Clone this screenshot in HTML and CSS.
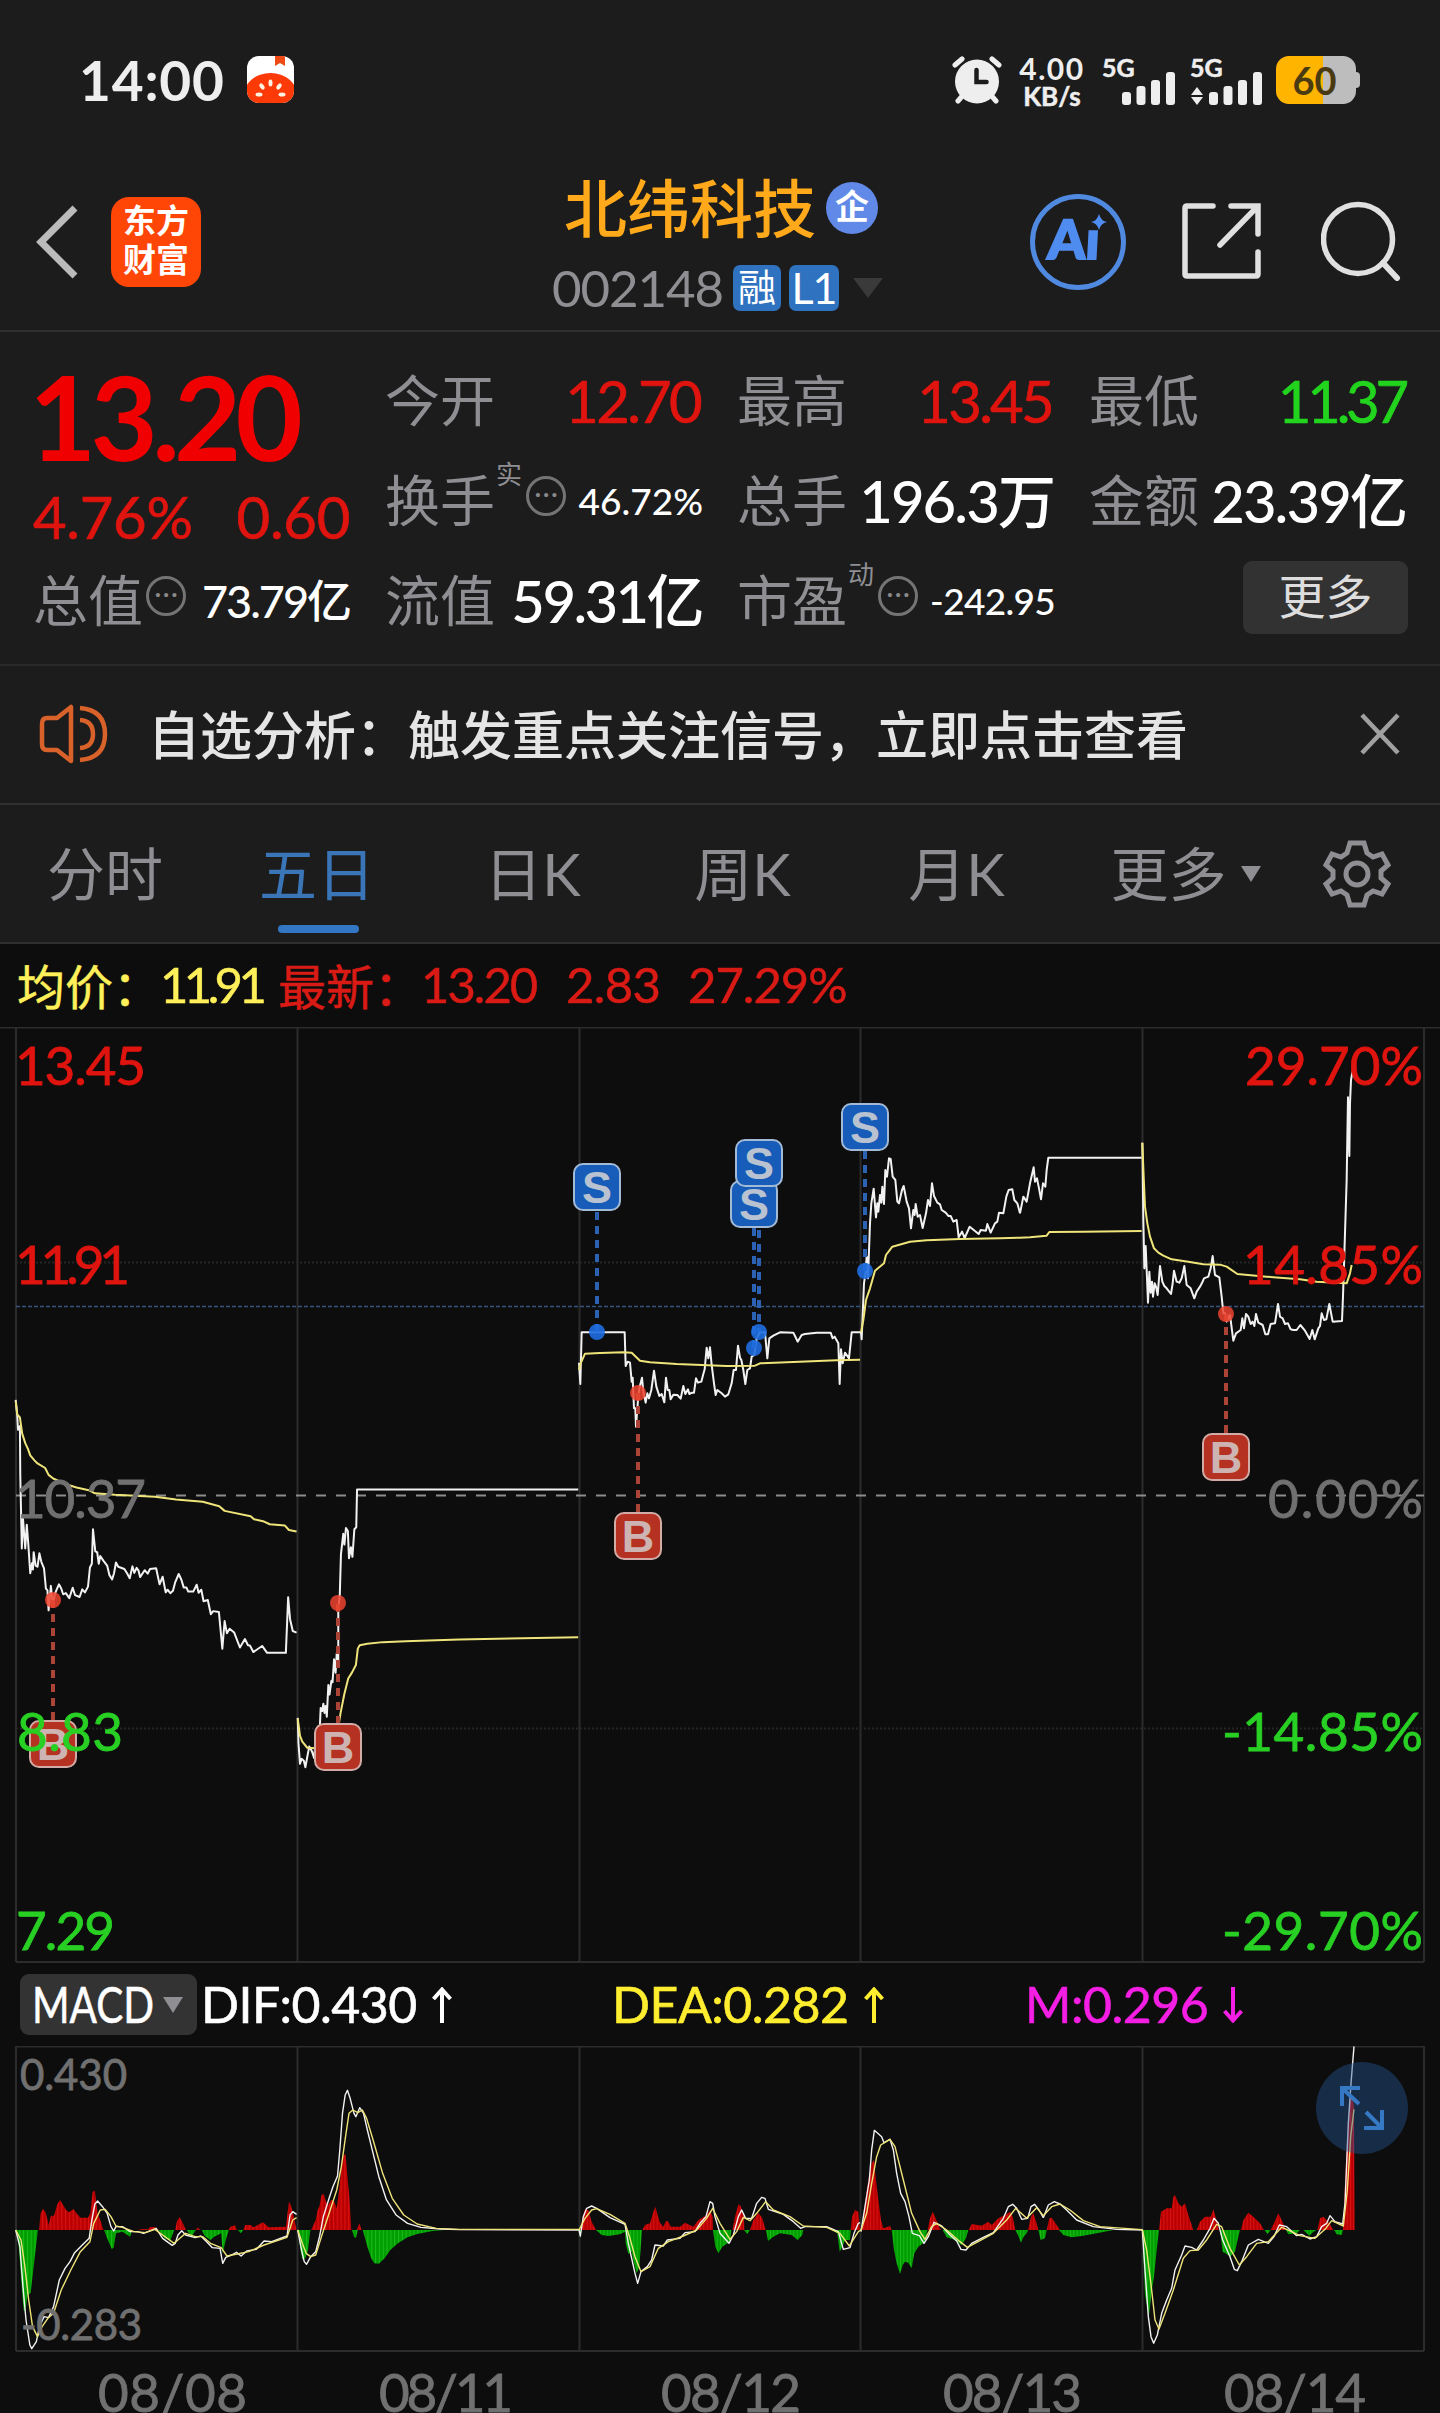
FILE: index.html
```html
<!DOCTYPE html>
<html lang="zh-CN">
<head>
<meta charset="utf-8">
<title>北纬科技 002148</title>
<link rel="stylesheet" href="styles.css">
</head>
<body>
<header class="top">
  <div class="status">
    <span class="clock">14:00</span>
    <svg class="tomato" width="47" height="47" viewBox="0 0 47 47"><defs><clipPath id="tc"><rect width="47" height="47" rx="12"/></clipPath></defs><g clip-path="url(#tc)"><rect width="47" height="47" fill="#fff"/><path d="M28 0h10v10l-5-3-5 3z" fill="#f04a14"/><ellipse cx="23.500" cy="40" rx="27" ry="23" fill="#fb3a08"/><g fill="#fff3e2"><ellipse cx="23.500" cy="27" rx="2" ry="3.500"/><ellipse cx="15" cy="30.500" rx="2" ry="3.500" transform="rotate(-35 15 30.500)"/><ellipse cx="32" cy="30.500" rx="2" ry="3.500" transform="rotate(35 32 30.500)"/><ellipse cx="12" cy="38.500" rx="3.500" ry="2"/><ellipse cx="35" cy="38.500" rx="3.500" ry="2"/></g></g></svg>
    <div class="status-right">
      <svg width="50" height="48" viewBox="0 0 50 48"><g stroke="#eee" stroke-width="5" stroke-linecap="round"><path d="M3 9l7-6M47 9l-7-6M12 38l-6 7M38 38l6 7"/></g><ellipse cx="25" cy="25.500" rx="22" ry="22" fill="#eee"/><path d="M24.500 14v12h10" fill="none" stroke="#1c1c1c" stroke-width="4.500" stroke-linecap="round"/></svg>
      <div class="speed"><span class="rate">4.00</span><span class="unit">KB/s</span></div>
      <div class="signal sig1"><span>5G</span></div>
      <svg class="bars bars1" width="54" height="34" viewBox="0 0 54 34" fill="#eee"><rect x="0" y="20" width="9" height="13" rx="3"/><rect x="14.500" y="14" width="9" height="19" rx="3"/><rect x="29" y="8" width="9" height="25" rx="3"/><rect x="44" y="0" width="9" height="33" rx="3"/></svg>
      <div class="signal sig2"><span>5G</span></div>
      <svg class="bars bars2" width="72" height="34" viewBox="-18 0 72 34" fill="#eee"><path d="M-12 15l6 8h-12zM-12 33l6-8h-12z"/><rect x="0" y="20" width="9" height="13" rx="3"/><rect x="14.500" y="14" width="9" height="19" rx="3"/><rect x="29" y="8" width="9" height="25" rx="3"/><rect x="44" y="0" width="9" height="33" rx="3"/></svg>
      <div class="battery">60</div>
    </div>
  </div>
  <div class="nav">
    <svg class="back" width="44" height="76" viewBox="0 0 44 76"><path d="M40 4L6 38l34 34" fill="none" stroke="#bbb" stroke-width="7"/></svg>
    <div class="logo"><span>东方</span><span>财富</span></div>
    <div class="title">
      <div class="name"><span>北纬科技</span><i class="corp">企</i></div>
      <div class="code"><span class="num">002148</span><b>融</b><b class="l1">L1</b><svg width="30" height="20" viewBox="0 0 30 20"><path d="M0 0h30L15 20z" fill="#3a3a3a"/></svg></div>
    </div>
    <svg class="ai" width="98" height="98" viewBox="0 0 98 98"><circle cx="49" cy="49" r="45.500" fill="none" stroke="#5089e0" stroke-width="5"/><text transform="translate(18 66) skewX(-3)" class="ai-text">Aı</text><path d="M70 21q2 7 8 8q-6 1-8 8q-2-7-8-8q6-1 8-8z" fill="#4f8cf0"/></svg>
    <svg class="share" width="80" height="78" viewBox="0 0 80 78"><path d="M31 4H5q-2 0-2 2v66q0 2 2 2h69q2 0 2-2V50M49 4h27v28M75 5L38 43" fill="none" stroke="#e0e0e0" stroke-width="5.500" stroke-linecap="round"/></svg>
    <svg class="search" width="80" height="80" viewBox="0 0 80 80"><circle cx="37" cy="38" r="34.500" fill="none" stroke="#e0e0e0" stroke-width="5.500"/><path d="M62 62l14 15" stroke="#e0e0e0" stroke-width="6" stroke-linecap="round"/></svg>
  </div>
</header>

<section class="quote">
  <div class="main">
    <div class="price">13.20</div>
    <div class="change"><span>4.76%</span><span>0.60</span></div>
  </div>
  <div class="cell"><span class="k">今开</span><span class="v red n1">12.70</span></div>
  <div class="cell"><span class="k">最高</span><span class="v red n1">13.45</span></div>
  <div class="cell"><span class="k">最低</span><span class="v green n3">11.37</span></div>
  <div class="cell"><span class="k">换手<sup>实</sup></span><i class="dots">•••</i><span class="v small">46.72%</span></div>
  <div class="cell"><span class="k">总手</span><span class="v n5">196.3万</span></div>
  <div class="cell"><span class="k">金额</span><span class="v n5">23.39亿</span></div>
  <div class="cell"><span class="k">总值</span><i class="dots">•••</i><span class="v mid">73.79亿</span></div>
  <div class="cell"><span class="k">流值</span><span class="v n8">59.31亿</span></div>
  <div class="cell"><span class="k">市盈<sup>动</sup></span><i class="dots">•••</i><span class="v small n9">-242.95</span></div>
  <div class="cell end"><span class="more">更多</span></div>
</section>

<section class="notice">
  <svg class="speaker" width="70" height="60" viewBox="0 0 70 60"><g fill="none" stroke="#d9622a" stroke-width="4.500" stroke-linejoin="round"><path d="M32 3v54L18 46H8q-5 0-5-6V20q0-6 5-6h10z"/><path d="M41 16q13 1 13 14t-13 14M41 4q25 2 25 26T41 56"/></g></svg>
  <span>自选分析：触发重点关注信号，立即点击查看</span>
  <svg class="close" width="40" height="42" viewBox="0 0 40 42"><path d="M2 2l36 38M38 2L2 40" stroke="#a0a0a0" stroke-width="4.500"/></svg>
</section>

<nav class="tabs">
  <span class="fs">分时</span><span class="on">五日</span><span class="dk">日K</span><span class="wk">周K</span><span class="wk">月K</span>
  <span>更多<svg width="20" height="16" viewBox="0 0 20 16"><path d="M0 0h20L10 16z" fill="#8e8e93"/></svg></span>
  <span><svg width="70" height="70" viewBox="-35 -35 70 70"><g fill="none" stroke="#8e8e93" stroke-width="5" stroke-linejoin="miter"><path d="M-7 -31H7L10 -21L16 -17L25 -20L31 -9L24 -3V4L31 10L25 20L16 17L10 21L7 31H-7L-10 21L-16 17L-25 20L-31 10L-24 4V-3L-31 -9L-25 -20L-16 -17L-10 -21Z"/><circle r="11"/></g></svg></span>
</nav>

<section class="info">
  <span class="avg">均价：</span><span class="avg f1">11.91</span><span class="last">最新：</span><span class="f2">13.20</span><span class="f3">2.83</span><span class="f4">27.29%</span>
</section>

<svg class="chart" width="1440" height="936" viewBox="0 1027 1440 936">
  <g class="grid">
    <path d="M0 1027.500H1440M16 1962H1424"/>
    <path d="M16 1028V1962M297.500 1028V1962M579.500 1028V1962M860.500 1028V1962M1142.500 1028V1962M1424 1028V1962"/>
    <path class="dotted" d="M16 1262.500H1424M16 1728.500H1424"/>
  </g>
  <path d="M16 1495.500H1424" stroke="#8c8c8c" stroke-width="2" stroke-dasharray="10 10"/>
  <path d="M16 1306.500H1424" stroke="#35557c" stroke-width="1.500" stroke-dasharray="4 2"/>
  <g class="line" transform="translate(0 1380) scale(.38267)">
    <polyline class="w" points="41,52 45,92 47,130 52,120 53,250 57,440 60,362 66,440 70,378 74,430 79,505 84,478 86,495 88,450 93,485 98,488 103,453 108,475 115,492 120,545 124,550 127,602 133,538 138,590 143,560 148,548 154,534 160,545 165,560 172,557 181,570 190,543 196,562 208,567 215,547 222,555 230,540 235,490 240,480 243,390 249,448 254,450 258,480 262,460 270,472 280,485 286,510 293,521 298,505 303,477 309,488 325,494 332,505 339,518 346,487 351,504 357,491 362,498 366,515 378,497 386,506 392,494 408,492 417,534 425,514 433,555 438,548 445,557 452,551 458,528 467,507 474,522 480,542 487,542 492,553 505,553 514,535 519,556 526,548 532,578 543,575 551,612 557,604 572,606 581,702 587,630 593,662 600,650 612,660 627,699 640,677 648,693 653,694 662,711 685,695 698,713 747,713 753,568 758,625 765,656 775,660"/>
    <polyline class="y" points="41,55 45,90 52,98 58,140 66,165 73,180 79,197 90,210 98,218 118,230 127,248 140,258 175,273 200,281 232,288 248,296 300,300 405,305 460,312 530,318 573,330 587,342 655,356 664,364 690,370 705,377 744,380 755,392 775,396"/>
    <polyline class="w" points="778,883 780,950 784,1003 788,990 794,995 798,1012 803,985 808,958 815,970 821,988 826,930 832,905 835,925 838,857 842,865 845,846 848,870 851,852 854,880 858,797 861,822 866,786 869,790 873,730 877,765 880,714 884,750 884,600 888,560 891,455 897,402 900,430 904,387 909,395 912,466 917,437 921,462 926,390 931,385 933,286 1511,286"/>
    <polyline class="y" points="778,885 784,930 790,945 803,961 825,962 845,953 868,938 882,920 890,870 900,820 910,780 920,764 930,745 935,702 940,693 960,689 1000,685 1060,683 1200,678 1511,672"/>
  </g>
  <g class="line" transform="translate(560 1080) scale(.33333)">
    <polyline class="w" points="57,848 61,912 65,757 194,757 197,858 203,845 210,848 215,905 218,893 222,985 226,985 228,1040 234,960 238,925 246,893 250,935 257,968 262,940 267,955 274,930 282,872 289,920 298,948 305,942 313,967 318,893 323,930 328,930 332,958 340,944 352,945 362,956 370,918 376,942 384,928 388,942 396,938 402,938 408,895 414,908 424,905 430,882 434,868 440,803 445,835 450,802 455,855 462,910 467,945 472,930 485,940 495,950 505,943 515,910 521,870 528,870 534,797 540,833 544,840 550,870 556,912 562,870 570,865 575,830 583,825 590,775 600,757 615,757 622,835 628,775 640,767 660,757 700,758 705,768 713,785 725,765 735,762 770,758 812,758 818,775 824,770 835,790 839,912 843,808 848,850 855,818 867,835 875,757 903,757 905,778 912,610 917,575 920,530 924,595 930,430 934,370 941,326 948,412 952,370 955,395 960,345 964,368 967,320 972,372 976,270 981,290 987,235 992,237 998,290 1006,300 1012,365 1017,370 1026,330 1031,318 1040,365 1047,385 1053,445 1060,390 1064,405 1067,372 1073,410 1080,405 1088,444 1098,400 1104,360 1110,378 1116,310 1122,348 1132,368 1140,373 1145,390 1157,398 1165,408 1172,408 1180,425 1190,420 1196,472 1206,455 1214,474 1229,440 1244,452 1256,462 1262,450 1278,452 1282,432 1292,458 1305,430 1312,425 1317,398 1330,400 1339,350 1346,330 1357,328 1363,360 1372,370 1380,400"/>
    <polyline class="y" points="57,870 62,850 75,821 120,819 190,817 215,818 240,842 270,847 350,852 500,858 585,857 600,850 700,846 830,841 900,839"/>
    <polyline class="y" points="903,757 910,720 918,660 930,625 945,572 972,550 978,525 997,500 1050,485 1100,481 1200,477 1320,475 1380,473"/>
  </g>
  <g class="line" transform="translate(1000 1020) scale(.33333)">
    <polyline class="w" points="60,580 70,530 80,545 90,490 101,442 105,485 111,475 117,505 123,538 129,490 136,500 140,450 145,413 425,413"/>
    <polyline class="y" points="60,653 90,652 140,647 148,636 250,635 425,633"/>
    <polyline class="w" points="427,368 430,600 433,745 437,678 440,750 444,848 448,755 452,818 456,785 459,830 464,790 468,800 473,825 480,738 487,785 493,798 500,805 513,822 518,790 522,752 530,785 538,788 545,775 553,738 560,795 572,805 583,835 590,815 600,800 607,787 612,775 625,770 632,745 638,708 645,765 658,772 665,830 670,880 675,880 680,905 690,885 700,962 708,940 722,930 727,895 732,925 738,882 745,890 752,912 758,905 763,918 768,882 775,908 788,915 796,943 804,943 812,912 825,910 834,852 840,890 848,895 855,912 864,910 872,928 880,930 890,930 901,915 915,932 929,957 937,930 944,958 955,925 960,918 965,880 972,900 979,898 988,852 998,905 1026,903 1029,830 1040,480 1044,232 1048,408 1050,250 1053,180 1060,142"/>
    <polyline class="y" points="427,368 431,470 435,560 442,610 450,650 462,685 475,698 490,707 515,718 565,725 610,733 660,734 680,740 712,762 800,770 900,778 950,785 1040,790 1050,760 1055,735"/>
  </g>
  <g class="sell">
    <path d="M597 1212V1332M754 1228V1348M759 1188V1332M865 1151V1271"/>
    <circle cx="597" cy="1332" r="8"/><circle cx="754" cy="1348" r="8"/><circle cx="759" cy="1332" r="8"/><circle cx="865" cy="1271" r="8"/>
    <rect x="574" y="1164" width="46" height="46" rx="9"/><text x="597" y="1203">S</text>
    <rect x="731" y="1181" width="46" height="46" rx="9"/><text x="754" y="1220">S</text>
    <rect x="736" y="1140" width="46" height="46" rx="9"/><text x="759" y="1179">S</text>
    <rect x="842" y="1104" width="46" height="46" rx="9"/><text x="865" y="1143">S</text>
  </g>
  <g class="buy">
    <path d="M53 1720V1600M338 1724V1603M638 1512V1393M1226 1433V1314"/>
    <circle cx="53" cy="1600" r="8"/><circle cx="338" cy="1603" r="8"/><circle cx="638" cy="1393" r="8"/><circle cx="1226" cy="1314" r="8"/>
    <rect x="30" y="1721" width="46" height="46" rx="9"/><text x="53" y="1760">B</text>
    <rect x="315" y="1724" width="46" height="46" rx="9"/><text x="338" y="1763">B</text>
    <rect x="615" y="1513" width="46" height="46" rx="9"/><text x="638" y="1552">B</text>
    <rect x="1203" y="1434" width="46" height="46" rx="9"/><text x="1226" y="1473">B</text>
  </g>
  <g class="axis">
    <text class="r" x="15" y="1085" textLength="131">13.45</text>
    <text class="r" x="15" y="1284" textLength="115">11.91</text>
    <text class="m" x="15" y="1518" textLength="131">10.37</text>
    <text class="g" x="17" y="1751" textLength="106">8.83</text>
    <text class="g" x="16" y="1950" textLength="99">7.29</text>
    <text class="r" x="1245" y="1085" textLength="178">29.70%</text>
    <text class="r" x="1243" y="1284" textLength="180">14.85%</text>
    <text class="m" x="1268" y="1518" textLength="155">0.00%</text>
    <text class="g" x="1222" y="1751" textLength="201">-14.85%</text>
    <text class="g" x="1222" y="1950" textLength="201">-29.70%</text>
  </g>
</svg>

<section class="legend">
  <span class="pick"><span class="macd">MACD</span><svg width="20" height="16" viewBox="0 0 20 16"><path d="M0 0h20L10 16z" fill="#8e8e93"/></svg></span>
  <span class="dif"><span>DIF:0.430</span><svg width="20" height="36" viewBox="0 0 20 36"><path d="M10 36V2M1.500 12L10 2.500L18.500 12"/></svg></span>
  <span class="dea"><span>DEA:0.282</span><svg width="20" height="36" viewBox="0 0 20 36"><path d="M10 36V2M1.500 12L10 2.500L18.500 12"/></svg></span>
  <span class="mm"><span>M:0.296</span><svg width="20" height="36" viewBox="0 0 20 36"><path d="M10 0V34M1.500 24L10 33.500L18.500 24"/></svg></span>
</section>

<svg class="chart" width="1440" height="367" viewBox="0 2046 1440 367">
  <defs>
    <pattern id="pr" width="10" height="10" patternUnits="userSpaceOnUse"><rect width="10" height="10" fill="#b80000"/><rect width="3" height="10" fill="#dc1212"/></pattern>
    <pattern id="pg" width="10" height="10" patternUnits="userSpaceOnUse"><rect width="10" height="10" fill="#009c00"/><rect width="3" height="10" fill="#18bc18"/></pattern>
  </defs>
  <g class="grid">
    <path d="M16 2046.500H1424M16 2351H1424M16 2046V2351M297.500 2046V2351M579.500 2046V2351M860.500 2046V2351M1142.500 2046V2351M1424 2046V2351"/>
  </g>
  <g class="line thin" transform="translate(0 1950) scale(.38267 .33333)">
    <path fill="url(#pr)" d="M102 840L106 790 113 776 120 790 127 825 133 797 141 797 150 762 157 750 165 765 173 780 180 787 192 777 200 790 210 803 230 803 236 790 242 725 248 722 255 790 262 810 270 840zM360 840L372 837 388 838 392 831 405 831 415 840zM458 840L462 815 469 801 476 815 486 840zM512 840L517 832 523 840zM597 840L602 830 614 826 619 840zM636 840L641 825 655 825 662 832 687 817 702 832 747 830 755 755 760 765 768 800 775 840zM813 840L825 810 830 780 835 768 840 735 846 732 852 755 858 765 865 750 872 750 880 775 888 700 895 620 903 612 908 680 913 740 918 840zM932 840L939 820 945 840z"/>
    <path fill="url(#pg)" d="M43 840L50 900 58 1030 62 1080 66 1085 72 1035 80 1030 88 950 95 880 99 840zM272 840L280 865 292 897 297 893 303 850 320 845 340 860 345 840zM415 840L430 865 445 872 455 840zM488 840L500 860 512 840zM527 840L535 858 550 870 560 860 578 850 582 910 590 870 598 840zM622 840L629 850 636 840zM779 840L785 900 790 928 798 925 805 900 811 840zM920 840L925 860 930 865 935 840zM948 840L960 890 970 925 978 940 990 941 1005 925 1020 900 1040 880 1065 862 1090 852 1130 843 1160 840z"/>
    <polyline class="w" points="41,840 52,890 60,1010 68,1110 78,1185 83,1196 95,1175 103,1130 115,1100 127,1103 140,1070 155,990 170,955 183,935 195,908 215,885 233,865 240,810 248,762 255,753 268,770 280,790 290,830 297,843 303,830 320,830 340,845 360,845 375,850 408,835 425,865 450,886 458,880 465,855 475,842 485,855 510,863 525,858 540,875 555,893 575,895 582,940 590,922 605,915 618,907 630,918 645,903 670,898 690,873 710,875 750,858 758,795 765,785 775,793"/>
    <polyline class="y" points="41,840 55,870 65,950 75,1050 85,1130 98,1160 110,1130 125,1105 140,1090 160,1020 185,960 210,905 235,875 245,820 262,780 275,778 290,800 303,828 320,832 350,845 380,848 405,838 425,855 455,880 485,850 510,860 530,860 550,880 578,893 593,918 620,912 650,905 690,885 750,862 765,810 775,803"/>
    <polyline class="w" points="778,840 788,900 795,935 801,943 812,920 825,905 835,860 845,800 860,745 870,710 882,678 888,600 895,490 902,435 908,421 915,445 925,490 930,500 940,473 950,490 960,540 975,610 990,680 1010,750 1035,795 1065,820 1100,832 1150,837 1200,839 1515,840"/>
    <polyline class="y" points="778,840 790,880 800,910 812,920 825,915 840,860 860,790 880,720 892,650 903,560 912,490 922,480 935,488 947,480 958,505 975,570 1000,670 1025,745 1055,795 1090,822 1140,835 1200,838 1515,838"/>
  </g>
  <g class="line thin" transform="translate(560 1950) scale(.33333)">
    <path fill="url(#pr)" d="M61 840L68 800 75 778 85 780 95 815 108 840zM247 840L255 825 270 820 280 785 286 770 293 795 300 818 310 830 318 812 325 815 332 830 360 830 375 818 400 830 415 810 440 795 450 780 458 800 459 840zM517 840L525 800 535 763 542 768 552 800 553 840zM570 840L580 810 595 788 607 805 617 840zM872 840L876 800 885 780 895 785 900 840zM906 840L915 760 925 690 935 640 942 630 948 690 955 750 963 810 970 835 990 828 995 840zM1103 840L1110 805 1118 785 1125 800 1135 825 1142 840zM1226 840L1235 822 1265 827 1285 815 1295 825 1315 805 1335 795 1350 785 1358 800 1366 840zM1404 840L1413 800 1420 790 1430 820 1435 840zM1460 840L1468 805 1475 803 1490 825 1500 840z"/>
    <path fill="url(#pg)" d="M57 840L61 865 64 840zM108 840L125 855 145 858 180 853 195 845 197 880 205 912 215 905 222 940 230 970 238 950 246 840zM459 840L466 890 475 910 487 890 510 875 514 840zM552 840L562 852 570 840zM618 840L624 873 640 860 660 850 695 855 713 870 727 855 730 840zM815 840L832 850 839 905 847 890 855 870 870 870 872 840zM995 840L1002 900 1010 940 1020 972 1028 945 1035 935 1045 938 1055 955 1063 910 1075 890 1095 875 1102 840zM1148 840L1160 862 1180 868 1205 885 1218 865 1225 840zM1366 840L1375 858 1383 878 1390 862 1400 850 1404 840zM1435 840L1442 870 1455 865 1460 840z"/>
    <polyline class="w" points="57,840 61,858 70,800 80,775 95,768 110,775 150,803 195,823 205,880 215,925 225,970 233,1000 243,965 262,950 275,930 285,885 310,888 322,870 360,865 375,848 405,845 420,820 438,800 450,755 458,760 465,800 480,850 507,880 520,855 535,800 545,780 557,805 575,805 590,760 605,742 615,745 625,778 670,793 700,815 722,835 735,830 800,830 835,845 850,898 870,893 882,850 895,820 900,818"/>
    <polyline class="w" points="903,845 915,770 928,690 935,600 943,541 965,560 972,578 990,568 1000,600 1010,670 1022,730 1035,755 1047,800 1057,850 1078,857 1092,880 1105,860 1122,817 1145,828 1170,855 1190,873 1203,898 1218,900 1235,880 1270,862 1300,848 1330,805 1345,770 1358,763 1370,775 1385,808 1403,805 1413,770 1424,763 1437,780 1450,803"/>
    <polyline class="y" points="57,840 75,805 95,780 110,776 150,793 195,820 210,865 225,920 243,965 270,950 295,895 325,875 370,858 410,840 440,805 458,775 480,820 510,868 530,845 550,802 570,812 590,790 617,755 640,780 690,800 730,828 800,832 840,850 868,888 895,845 903,840 920,790 935,700 950,620 962,585 990,568 1005,590 1030,690 1055,790 1080,845 1095,868 1115,830 1130,820 1160,840 1200,875 1222,892 1260,872 1300,850 1340,810 1367,775 1400,805 1430,773 1450,797"/>
  </g>
  <g class="line thin" transform="translate(1000 1950) scale(.33333)">
    <path fill="url(#pr)" d="M477 840L483 785 500 775 515 775 520 740 525 735 535 760 545 770 555 760 565 795 580 840zM590 840L600 815 615 800 632 800 640 778 648 805 656 840zM723 840L730 810 745 788 760 800 780 820 792 840zM812 840L822 820 835 790 845 810 858 840zM952 840L960 805 970 800 985 815 1000 840zM1029 840L1035 700 1045 490 1055 430 1062 470 1064 840z"/>
    <path fill="url(#pg)" d="M177 840L190 855 215 862 250 857 290 850 340 840zM427 840L435 1035 447 1097 455 1025 462 980 470 900 477 840zM660 840L668 905 680 912 690 920 705 905 715 860 720 840zM793 840L803 852 812 840zM858 840L865 853 890 850 900 840zM910 840L928 857 940 845 950 840zM1002 840L1010 853 1025 855 1029 840z"/>
    <polyline class="w" points="130,803 145,765 163,755 180,762 200,780 230,810 280,830 350,838 427,840 435,960 445,1100 453,1160 461,1180 472,1155 485,1090 500,1050 515,1015 525,960 545,915 555,888 575,892 590,900 610,870 630,835 642,805 655,820 668,870 690,920 703,958 712,962 725,935 745,885 775,868 805,880 822,860 838,825 860,830 890,857 905,853 930,867 950,860 965,830 980,820 990,797 1005,815 1028,822 1035,760 1045,520 1053,400 1062,289"/>
    <polyline class="y" points="130,797 155,770 180,762 210,780 250,812 300,830 427,839 440,900 455,1020 465,1110 477,1137 495,1090 520,1020 550,925 570,902 595,900 620,870 650,823 665,830 690,895 718,945 740,920 770,880 805,875 845,832 860,838 900,857 945,865 975,838 995,812 1030,828 1042,720 1052,560 1062,478"/>
  </g>
  <circle cx="1362" cy="2108" r="46" fill="#255894" fill-opacity=".43"/>
  <path d="M1359 2104L1342 2088M1342 2106V2088H1360M1366 2112L1383 2129M1382 2110V2128H1364" fill="none" stroke="#3578c4" stroke-width="4"/>
  <g class="axis">
    <text class="m s" x="20" y="2089.500" textLength="107">0.430</text>
    <text class="m s" x="21" y="2339.500" textLength="121">-0.283</text>
    <text class="m" x="98" y="2412" textLength="149">08/08</text>
    <text class="m" x="379" y="2412" textLength="134">08/11</text>
    <text class="m" x="661" y="2412" textLength="140">08/12</text>
    <text class="m" x="943" y="2412" textLength="139">08/13</text>
    <text class="m" x="1224" y="2412" textLength="142">08/14</text>
  </g>
</svg>
</body>
</html>
```
FILE: styles.css
```css
* { box-sizing: border-box; }
body {
  margin: 0;
  width: 1440px;
  height: 2413px;
  overflow: hidden;
  background: #0d0d0d;
  color: #fff;
  font-family: Lato, "Noto Sans CJK SC", sans-serif;
}
i { font-style: normal; }
svg { display: block; flex: none; }
.top { height: 332px; background: #1c1c1c; border-bottom: 2px solid #303030; }

.status { display: flex; align-items: flex-start; height: 160px; padding: 56px 84px 0 79px; color: #eee; }
.clock { font-size: 55px; line-height: 48px; font-weight: 700; width: 168px; letter-spacing: .8px; }
.status-right { display: flex; align-items: flex-start; margin-left: auto; white-space: nowrap; }
.speed { display: flex; flex-direction: column; align-items: center; width: 66px; margin-left: 17px; font-weight: 700; }
.speed .rate { font-size: 30px; line-height: 24px; letter-spacing: 1.6px; }
.speed .unit { font-size: 26px; line-height: 32px; -webkit-text-stroke: .5px; }
.signal { width: 34px; margin-left: 17px; font-size: 25px; line-height: 22px; font-weight: 700; -webkit-text-stroke: .5px; }
.sig2 { margin-left: 14px; }
.bars { margin-top: 16px; }
.bars1 { margin-left: -14px; }
.bars2 { margin-left: -33px; }
.battery {
  width: 80px; height: 48px; margin-left: 13px; padding-right: 3px; border-radius: 13px;
  background: linear-gradient(90deg, #ffb400 47px, #bdbdbd 47px);
  color: #4a3a12; font-size: 38px; line-height: 48px; font-weight: 700; text-align: center; position: relative;
}
.battery::after { content: ""; position: absolute; left: 80px; top: 16px; width: 4px; height: 16px; background: #bdbdbd; border-radius: 0 4px 4px 0; }

.nav { display: flex; align-items: flex-start; height: 170px; padding-left: 35px; }
.back { margin-top: 44px; }
.logo {
  display: flex; flex-direction: column; align-items: center; width: 90px; height: 90px; margin: 37px 0 0 32px; padding-top: 3px;
  background: #ff4607; border-radius: 18px; font: 700 33px/39px "Noto Sans CJK SC", sans-serif;
}
.title { width: 332px; margin: 15px 0 0 351px; }
.name { display: flex; align-items: center; height: 66px; margin-left: 12px; color: #ffa91b; font-size: 63px; font-weight: 500; line-height: 66px; }
.corp { width: 52px; height: 52px; margin-left: 10px; border-radius: 50%; background: #6089e8; color: #fff; font-size: 34px; font-weight: 700; line-height: 48px; text-align: center; }
.code { display: flex; align-items: center; height: 48px; margin-top: 23px; color: #8e8e93; font-size: 51px; line-height: 48px; }
.code .num { width: 181px; letter-spacing: -1.1px; }
.code b { width: 48px; height: 46px; margin-right: 8px; border-radius: 7px; background: #2f72bf; color: #fff; font-weight: 400; font-size: 38px; line-height: 42px; text-align: center; }
.code .l1 { width: 50px; font-size: 43px; line-height: 45px; letter-spacing: -1px; margin-right: 14px; }
.ai { margin: 33px 0 0 145px; }
.ai-text { font: 900 54px Lato, sans-serif; fill: #4f8cf0; stroke: #4f8cf0; stroke-width: 2; }
.share { margin: 42px 0 0 55px; }
.search { margin: 41px 0 0 59px; }

.quote {
  display: grid; grid-template-columns: repeat(4, 315px); grid-template-rows: repeat(3, 100px); column-gap: 37px;
  height: 332px; padding: 19px 0 0 35px; background: #1c1c1c;
}
.main { grid-row: span 2; }
.price { height: 135px; margin: 0 0 0 -6px; padding-top: 1px; color: #f00000; font-size: 116px; font-weight: 700; line-height: 130px; letter-spacing: -5.7px; }
.change { display: flex; justify-content: space-between; margin-left: -2px; color: #e0140f; font-size: 58px; line-height: 62px; letter-spacing: -.3px; -webkit-text-stroke: .7px; }
.cell { display: flex; align-items: center; justify-content: space-between; white-space: nowrap; }
.k { color: #8e8e93; font-size: 55px; line-height: 80px; position: relative; margin: -2px 0 0 -2px; }
.k sup { position: absolute; left: 111px; top: -26px; font-size: 26px; line-height: 80px; }
.v { font-size: 58px; font-weight: 500; line-height: 80px; }
.mid { font-size: 45px; letter-spacing: -2px; }
.small { font-size: 37px; margin-right: -1px; }
.red { color: #e0140f; font-weight: 400; -webkit-text-stroke: .7px; }
.green { color: #22d41e; font-weight: 400; -webkit-text-stroke: .7px; }
.n1 { letter-spacing: -2.7px; margin-right: 2px; }
.n3 { letter-spacing: -4.2px; margin-right: 1px; }
.n5 { letter-spacing: -1.9px; }
.n8 { letter-spacing: -2.6px; }
.n9 { letter-spacing: -.7px; }
.dots { width: 40px; height: 40px; margin: -10px auto 0 3px; border: 3px solid #747474; border-radius: 50%; color: #8a8a8a; font: 15px/32px "Liberation Sans", sans-serif; letter-spacing: 3px; text-indent: 3px; text-align: center; }
.k:has(sup) + .dots { margin-left: 31px; }
.end { justify-content: flex-end; }
.more { width: 165px; height: 73px; margin: -8px -2px 0 0; border-radius: 9px; background: #323232; color: #ddd; font-size: 47px; line-height: 70px; text-align: center; }

.notice { display: flex; align-items: center; height: 141px; padding: 0 40px 2px 39px; background: #1c1c1c; border-top: 2px solid #292929; border-bottom: 2px solid #303030; color: #e5e5e5; font-size: 52px; }
.notice span { margin: -3px 0 0 39px; font-weight: 500; }
.close { margin-left: auto; }

.tabs { display: grid; grid-template-columns: 212px 208px 232px 186px 242px 211px 132px; height: 139px; background: #1c1c1c; border-bottom: 2px solid #303030; color: #8e8e93; font-size: 58px; line-height: 137px; }
.tabs span { display: flex; align-items: center; justify-content: center; gap: 14px; position: relative; }
.tabs .fs { padding-right: 2px; }
.tabs .on { padding-left: 2px; color: #3a75b8; }
.tabs .dk { padding-right: 7px; }
.tabs .wk { padding-right: 5px; }
.tabs .on::after { content: ""; position: absolute; left: 66px; bottom: 9px; width: 81px; height: 8px; border-radius: 4px; background: #3276c4; }

.info { display: flex; align-items: center; height: 83px; padding: 0 0 4px 17px; color: #d91a15; font-size: 49px; white-space: nowrap; -webkit-text-stroke: .5px; }
.info .avg { color: #fff05a; }
.info .last, .info .avg:first-child { font-size: 48px; width: 143px; }
.f1 { width: 118px; letter-spacing: -4.6px; }
.f2 { width: 145px; letter-spacing: -2px; }
.f3 { width: 122px; letter-spacing: -.6px; }
.f4 { letter-spacing: -1px; }

.grid path { fill: none; stroke: #2c2c2c; stroke-width: 2; }
.grid .dotted { stroke: #252525; stroke-dasharray: 2 2; }
.line polyline { fill: none; stroke-width: 2; vector-effect: non-scaling-stroke; stroke-linejoin: round; }
.thin polyline { stroke-width: 1.4; }
.line .w { stroke: #f2f2f2; }
.line .y { stroke: #efe47a; }
.sell path, .buy path { fill: none; stroke-width: 4; stroke-dasharray: 8 6; }
.sell path { stroke: #2c62b4; }
.buy path { stroke: #ab4436; }
.sell circle { fill: #1e6ee0; fill-opacity: .9; }
.buy circle { fill: #ee4430; fill-opacity: .85; }
.sell rect { fill: #165cb8; stroke: #a3bad6; stroke-width: 2; }
.buy rect { fill: #b53222; stroke: #d2aaa6; stroke-width: 2; }
.sell text, .buy text { font: 700 45px "Liberation Sans", sans-serif; text-anchor: middle; fill: #b9c2d0; }
.buy text { fill: #cdb4b2; }
.axis text { font-size: 53px; stroke-width: .8px; }
.axis .s { font-size: 42px; }
.axis .r { fill: #e0140f; stroke: #e0140f; }
.axis .g { fill: #28d024; stroke: #28d024; }
.axis .m { fill: #707070; stroke: #707070; }

.legend { display: grid; grid-template-columns: 181px 411px 413px 1fr; align-items: center; height: 83px; padding: 0 0 0 20px; font-size: 50px; line-height: 61px; white-space: nowrap; -webkit-text-stroke: .6px; }
.pick { display: flex; align-items: center; gap: 13px; width: 177px; height: 61px; padding-left: 12px; border-radius: 9px; background: #333; }
.macd { width: 118px; transform: scaleX(.81); transform-origin: 0 0; }
.legend > span:not(.pick) { display: flex; align-items: center; gap: 15px; }
.legend path { fill: none; }
.legend .pick path { fill: #8e8e93; }
.dif path { stroke: #fff; stroke-width: 4; }
.dea path { stroke: #ffee30; stroke-width: 4; }
.mm path { stroke: #f51ee4; stroke-width: 4; }
.dif > span { letter-spacing: -.5px; }
.dea > span { letter-spacing: -.5px; }
.mm > span { letter-spacing: -.5px; }
.dea { color: #ffee30; }
.mm { color: #f51ee4; }
```
